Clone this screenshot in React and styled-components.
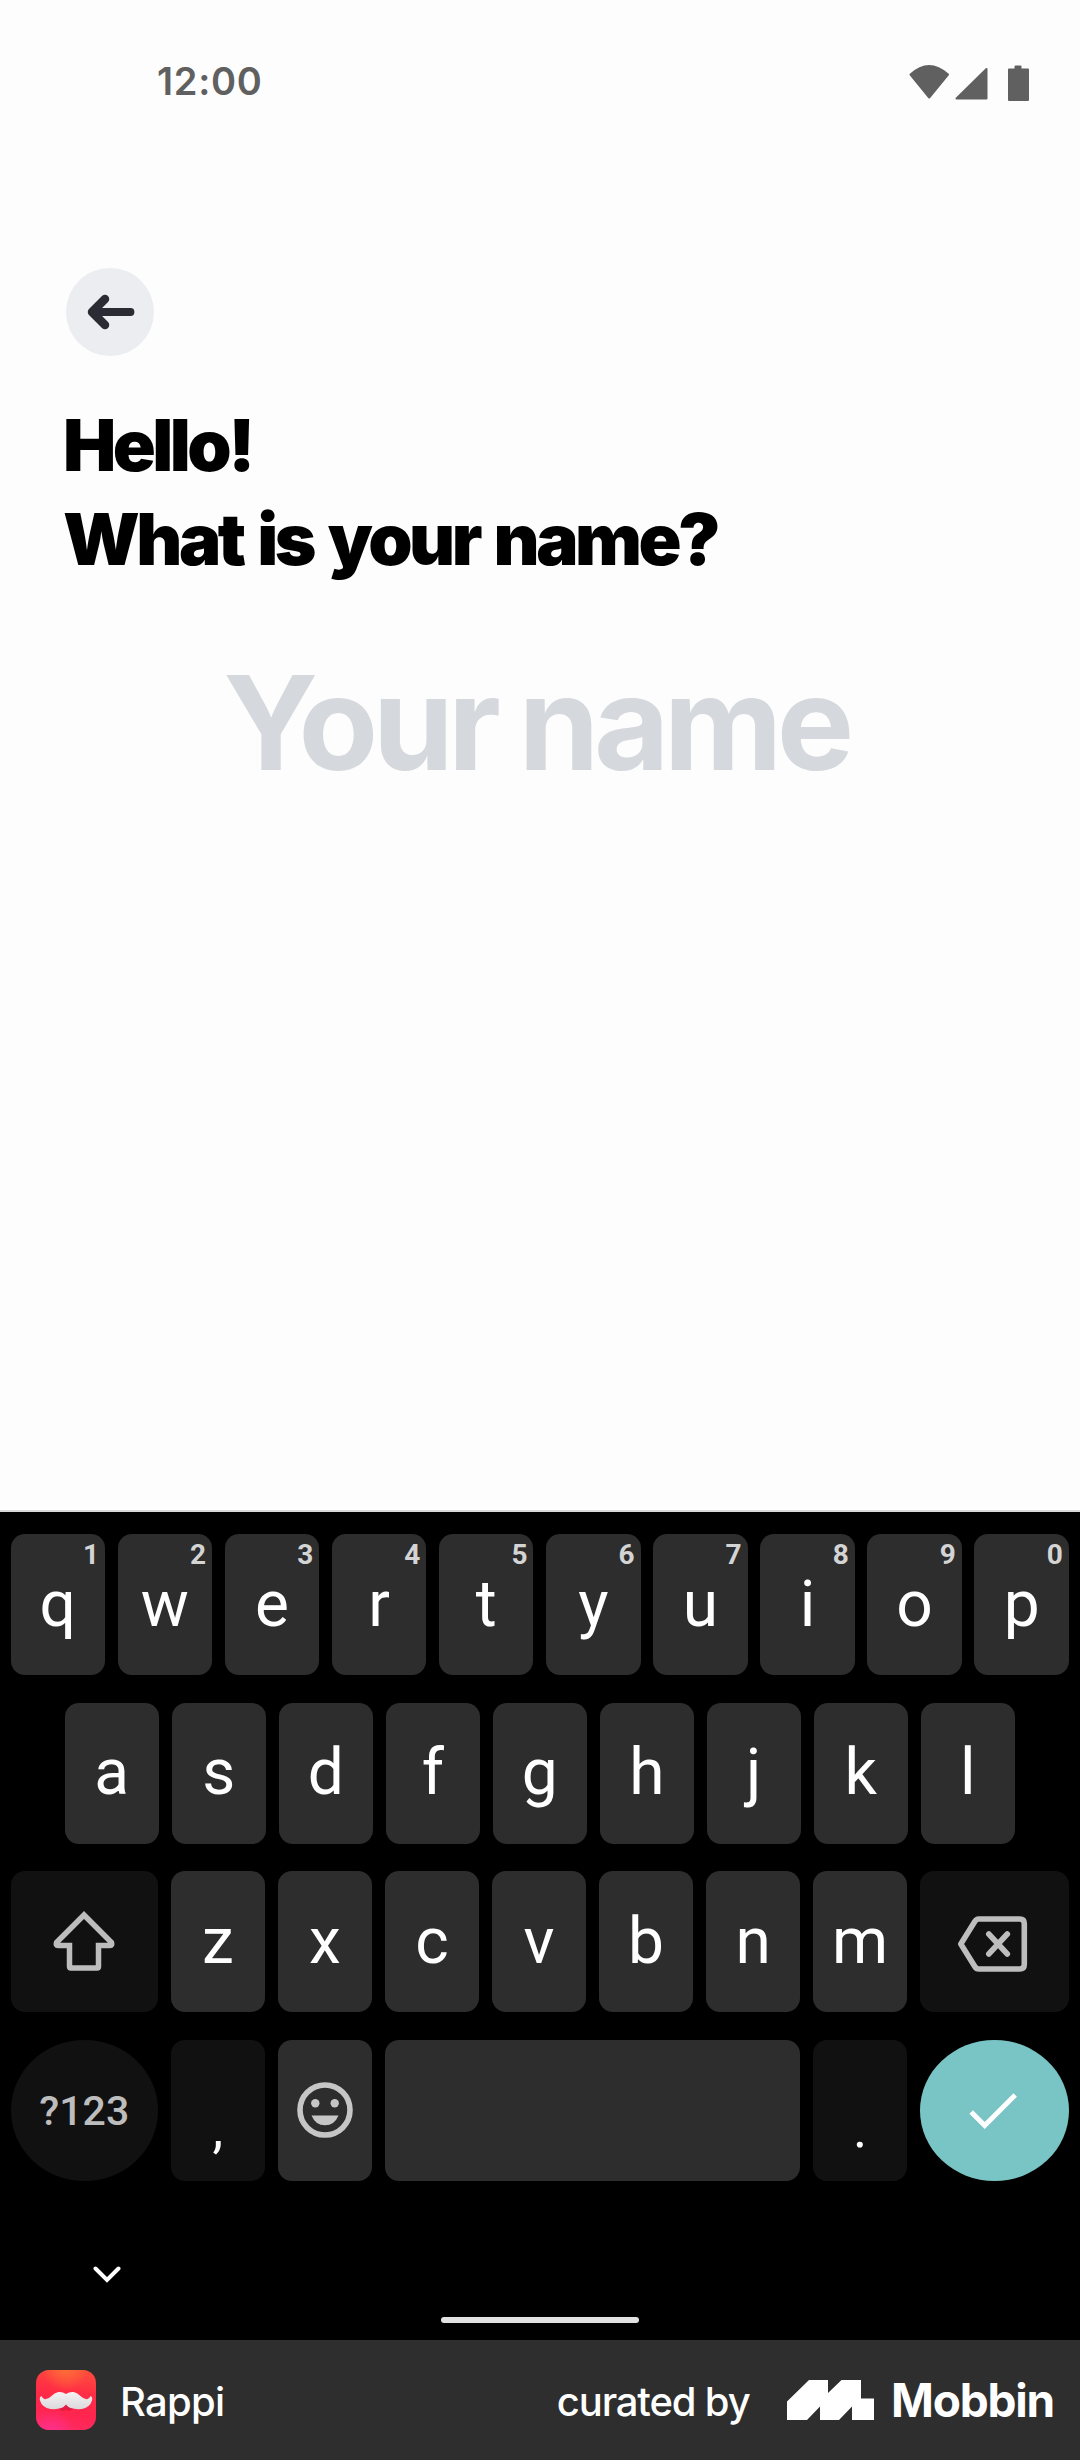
import React from "react";
import styled, { createGlobalStyle } from "styled-components";

const Global = createGlobalStyle`
  *, *::before, *::after { box-sizing: border-box; }
  html, body { margin: 0; padding: 0; background: #fdfdfd; }
  button { font: inherit; border: 0; margin: 0; padding: 0; color: inherit; }
`;

const Screen = styled.div`
  width: 1080px;
  height: 2460px;
  display: flex;
  flex-direction: column;
  overflow: hidden;
  background: #fdfdfd;
  font-family: Inter, "Liberation Sans", sans-serif;
`;

const Content = styled.main`
  height: 1512px;
  flex: none;
  display: flex;
  flex-direction: column;
  border-bottom: 2px solid #d9d9da;
`;

const StatusBar = styled.header`
  height: 162px;
  padding: 0 50px 0 157px;
  display: flex;
  align-items: center;
  justify-content: space-between;
`;

const Clock = styled.span`
  font-size: 38px;
  font-weight: 620;
  line-height: 46px;
  letter-spacing: 0.7px;
  color: #606060;
`;

const StatusIcons = styled.svg`
  display: block;
  width: 122px;
  height: 38px;
  overflow: visible;
`;

const BackButton = styled.button`
  width: 88px;
  height: 88px;
  margin: 106px 0 0 65.5px;
  border-radius: 50%;
  background: #ebedf1;
  display: flex;
  align-items: center;
  justify-content: center;
`;

const Heading = styled.h1`
  margin: 42px 0 0 63px;
  font-size: 71px;
  font-weight: 900;
  line-height: 94px;
  letter-spacing: -3.5px;
  word-spacing: 4px;
  color: #000;
  white-space: nowrap;
`;

const HeadingLine = styled.span`
  display: block;
`;

const NameField = styled.div`
  margin-top: 47px;
  height: 180px;
  padding-right: 8px;
  display: flex;
  justify-content: center;
  font-size: 130px;
  font-weight: 700;
  line-height: 180px;
  letter-spacing: -5.6px;
  word-spacing: -2px;
  color: #d5d9dd;
  white-space: nowrap;
`;

const Keyboard = styled.section`
  height: 828px;
  flex: none;
  padding: 22px 11px 0 10.5px;
  display: flex;
  flex-direction: column;
  background: #000;
  font-family: Roboto, "Liberation Sans", sans-serif;
`;

const Keys = styled.div`
  display: flex;
  flex-direction: column;
  gap: 27.5px;
`;

const KeyRow = styled.div`
  height: 141px;
  display: flex;
  gap: 12.5px;
  padding: 0 ${(p) => p.$inset || 0}px;
`;

const Key = styled.button`
  position: relative;
  flex: ${(p) => p.$grow || 94.5} 1 0;
  min-width: 0;
  display: flex;
  align-items: ${(p) => (p.$low ? "flex-end" : "center")};
  justify-content: center;
  padding-top: ${(p) => (p.$muted ? 2 : 0)}px;
  padding-bottom: ${(p) => (p.$low ? 14 : 0)}px;
  border-radius: ${(p) => (p.$round ? "50%" : "14px")};
  background: ${(p) => (p.$accent ? "#79c4c4" : p.$dim ? "#111" : "#2d2d2d")};
  color: ${(p) => (p.$muted ? "#bdbdbd" : "#fff")};
  font-size: ${(p) => (p.$muted ? 41 : p.$low ? 54 : 64)}px;
  font-weight: ${(p) => (p.$muted ? 500 : 400)};
  line-height: 76px;

  svg { display: block; overflow: visible; }
`;

const Hint = styled.span`
  position: absolute;
  top: 4px;
  right: 6px;
  font-size: 28px;
  line-height: 33px;
  font-weight: 700;
  color: #d4d4d4;
`;

const NavRow = styled.div`
  flex: 1;
  display: flex;
  flex-direction: column;
  justify-content: space-between;
  padding: 85px 0 17px 82.5px;
`;

const HomeBar = styled.div`
  width: 198px;
  height: 6px;
  margin-left: 348px;
  border-radius: 3px;
  background: #e2e2e2;
`;

const Footer = styled.footer`
  height: 120px;
  flex: none;
  padding: 0 26px 0 36px;
  display: flex;
  align-items: center;
  background: #2e2e2e;
  color: #fff;
`;

const AppName = styled.span`
  margin: 4px auto 0 24px;
  font-size: 40px;
  line-height: 48px;
  font-weight: 550;
  letter-spacing: -0.7px;
`;

const Curated = styled.span`
  margin: 4px 37.5px 0 0;
  font-size: 40px;
  line-height: 48px;
  font-weight: 550;
  letter-spacing: -1.15px;
`;

const Brand = styled.span`
  margin-left: 16px;
  font-size: 46px;
  line-height: 56px;
  font-weight: 700;
  letter-spacing: -1.2px;
`;

const TOP = ["q", "w", "e", "r", "t", "y", "u", "i", "o", "p"];
const HOME = ["a", "s", "d", "f", "g", "h", "j", "k", "l"];
const BOTTOM = ["z", "x", "c", "v", "b", "n", "m"];

function ArrowIcon() {
  return (
    <svg width="50" height="40" viewBox="0 0 50 40" fill="none" stroke="#2a2b33" strokeLinecap="round" strokeLinejoin="round">
      <path strokeWidth="8.500" d="M20 7 7 20l13 13" />
      <path strokeWidth="7.800" d="M8 20h37.500" />
    </svg>
  );
}

function ShiftIcon() {
  return (
    <svg width="62" height="62" viewBox="0 0 62 62" fill="none" stroke="#bdbdbd" strokeWidth="5.5">
      <path d="M31 4 3.500 31.500Q2.500 34.500 5 34.500H16.500V55.500Q16.500 57 18 57H44Q45.500 57 45.500 55.500V34.500H57Q59.500 34.500 58.500 31.500Z" />
    </svg>
  );
}

function BackspaceIcon() {
  return (
    <svg width="70" height="56" viewBox="1.200 -2 70 56" fill="none" stroke="#bdbdbd" strokeWidth="5.6">
      <path strokeLinejoin="round" d="M3 28 17 5.500Q18.500 3 21 3H62Q66.500 3 66.500 7.500V48.500Q66.500 53 62 53H21Q18.500 53 17 50.500Z" />
      <path strokeLinecap="round" d="M31 18 49.500 38M49.500 18 31 38" />
    </svg>
  );
}

function EmojiIcon() {
  return (
    <svg width="56" height="56" viewBox="0 0 56 56" fill="#c6c6c6">
      <circle cx="28" cy="28" r="25" fill="none" stroke="#c6c6c6" strokeWidth="5.600" />
      <circle cx="18.300" cy="21.300" r="4.200" />
      <circle cx="37.700" cy="21.300" r="4.200" />
      <path d="M14.500 33.500H41.500Q37.500 43.300 28 43.300T14.500 33.500Z" />
    </svg>
  );
}

function RappiIcon() {
  return (
    <svg width="60" height="60" viewBox="0 0 60 60">
      <defs>
        <linearGradient id="rappiBase" x1="0.550" y1="0" x2="0.400" y2="1">
          <stop offset="0" stopColor="#ff4a3d" />
          <stop offset="0.350" stopColor="#ff2d45" />
          <stop offset="0.700" stopColor="#ff254f" />
          <stop offset="1" stopColor="#ff2a60" />
        </linearGradient>
        <radialGradient id="rappiTop" cx="0.500" cy="-0.050" r="0.400">
          <stop offset="0" stopColor="#ff7038" />
          <stop offset="1" stopColor="#ff7038" stopOpacity="0" />
        </radialGradient>
        <radialGradient id="rappiBottom" cx="0.250" cy="1.080" r="0.420">
          <stop offset="0" stopColor="#ff3193" />
          <stop offset="1" stopColor="#ff3193" stopOpacity="0" />
        </radialGradient>
        <linearGradient id="rappiHair" x1="0" y1="0" x2="0" y2="1">
          <stop offset="0" stopColor="#f4f2f3" />
          <stop offset="1" stopColor="#dcd9dc" />
        </linearGradient>
      </defs>
      <rect width="60" height="60" rx="13" fill="url(#rappiBase)" />
      <rect width="60" height="60" rx="13" fill="url(#rappiTop)" />
      <rect width="60" height="60" rx="13" fill="url(#rappiBottom)" />
      <path d="M22 38Q28 37.500 30 35Q32 37.500 38 38Q33 43 30 39.500Q26 43 22 38Z" fill="#d0143c" opacity="0.600" />
      <path d="M30 24Q26.500 21.500 22.500 22Q19 22.300 15.500 26Q12 29.500 9 29.300Q6.500 29 5.500 26Q3 27.500 4 30.500Q6 37.500 14.500 39Q26 40 30 34.500Q34 40 45.500 39Q54 37.500 56 30.500Q57 27.500 54.500 26Q53.500 29 51 29.300Q48 29.500 44.500 26Q41 22.300 37.500 22Q33.500 21.500 30 24Z" fill="url(#rappiHair)" />
    </svg>
  );
}

function MobbinMark() {
  return (
    <svg width="88" height="40" viewBox="0 0 88 40" fill="#fff">
      <path d="M22 0H41V13L54.500 0H74V18.500H87V40H65V26.500L52 40H33V26.500L20 40H0V21.500Z" />
    </svg>
  );
}

export default function App() {
  return (
    <Screen>
      <Global />
      <Content>
        <StatusBar>
          <Clock>12:00</Clock>
          <StatusIcons viewBox="0 0 122 38" fill="#606060" stroke="#606060" strokeWidth="2" strokeLinejoin="round">
            <path d="M2.500 12.500Q21-4.500 40 12.500L21.200 35.500Z" />
            <path d="M78.500 7V36.500H48.500Z" />
            <path d="M101 7.500H107.500V4.500H112.500V7.500H120V38H101Z" />
          </StatusIcons>
        </StatusBar>
        <BackButton aria-label="Back">
          <ArrowIcon />
        </BackButton>
        <Heading>
          <HeadingLine>Hello!</HeadingLine>
          <HeadingLine>What is your name?</HeadingLine>
        </Heading>
        <NameField>Your name</NameField>
      </Content>
      <Keyboard>
        <Keys>
          <KeyRow>
            {TOP.map((k, i) => (
              <Key key={k}>
                <Hint>{(i + 1) % 10}</Hint>
                {k}
              </Key>
            ))}
          </KeyRow>
          <KeyRow $inset={54}>
            {HOME.map((k) => (
              <Key key={k}>{k}</Key>
            ))}
          </KeyRow>
          <KeyRow>
            <Key $grow={147.5} $dim aria-label="Shift">
              <ShiftIcon />
            </Key>
            {BOTTOM.map((k) => (
              <Key key={k}>{k}</Key>
            ))}
            <Key $grow={149} $dim aria-label="Backspace">
              <BackspaceIcon />
            </Key>
          </KeyRow>
          <KeyRow>
            <Key $grow={147.5} $dim $round $muted>?123</Key>
            <Key $dim $low>,</Key>
            <Key aria-label="Emoji">
              <EmojiIcon />
            </Key>
            <Key $grow={415.5} aria-label="Space" />
            <Key $dim $low>.</Key>
            <Key $grow={149} $accent $round aria-label="Done">
              <svg width="48" height="38" viewBox="0.800 -1 48 38" fill="none" stroke="#fff" strokeWidth="5">
                <path d="M2 20 15.500 33.500 46 3" />
              </svg>
            </Key>
          </KeyRow>
        </Keys>
        <NavRow>
          <svg width="28" height="18" viewBox="0 0 28 18" fill="none" stroke="#fff" strokeWidth="4" strokeLinecap="round">
            <path d="M2.500 2.500 14 14 25.500 2.500" />
          </svg>
          <HomeBar />
        </NavRow>
      </Keyboard>
      <Footer>
        <RappiIcon />
        <AppName>Rappi</AppName>
        <Curated>curated by</Curated>
        <MobbinMark />
        <Brand>Mobbin</Brand>
      </Footer>
    </Screen>
  );
}
